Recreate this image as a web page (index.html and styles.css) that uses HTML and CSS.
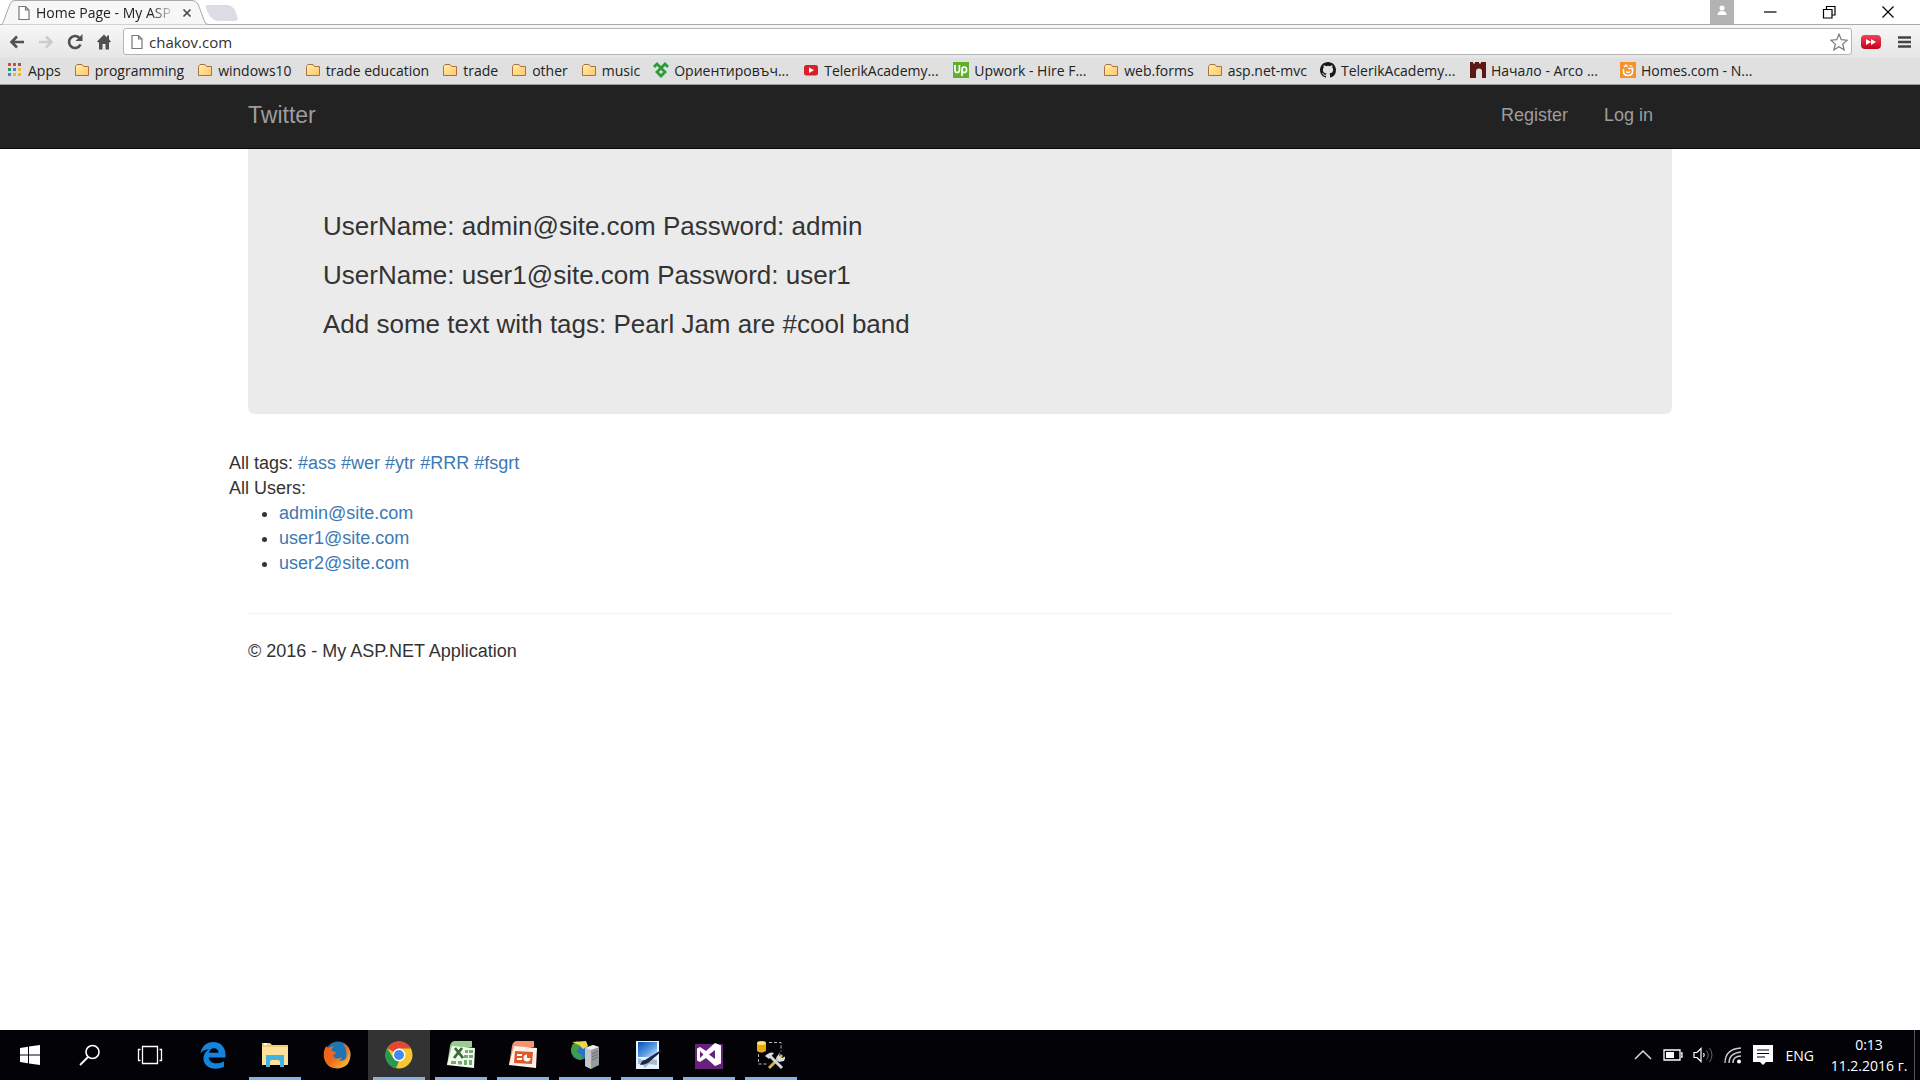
FILE: index.html
```html
<!DOCTYPE html>
<html lang="en">
<head>
<meta charset="utf-8">
<title>Home Page - My ASP.NET Application</title>
<link rel="stylesheet" href="styles.css">
</head>
<body>
<svg class="defs" width="0" height="0" aria-hidden="true">
  <defs>
    <linearGradient id="folder-fill" x1="0" y1="0" x2="1" y2="1"><stop offset="0" stop-color="#fff3a8"/><stop offset="1" stop-color="#ffc46b"/></linearGradient>
    <linearGradient id="red-fill" x1="0" y1="0" x2="0" y2="1"><stop offset="0" stop-color="#f0435c"/><stop offset="1" stop-color="#c4001f"/></linearGradient>
    <linearGradient id="screen-fill" x1="0" y1="0" x2="1" y2="1"><stop offset="0" stop-color="#0a4fae"/><stop offset=".6" stop-color="#5fa0e6"/><stop offset="1" stop-color="#e8f4ff"/></linearGradient>
    <linearGradient id="fox-fill" x1="0" y1="0" x2="1" y2="1"><stop offset="0" stop-color="#e8601c"/><stop offset=".5" stop-color="#ee6a1d"/><stop offset="1" stop-color="#ffd23c"/></linearGradient>
    <symbol id="folder" viewBox="0 0 16 16"><path d="M1.500 13.500V4.500L3 2.500h5l1.500 2h5v9z" fill="url(#folder-fill)" stroke="#a9713f"/></symbol>
    <symbol id="page" viewBox="0 0 16 16"><path d="M3 1.500h6.500L13 5v9.500H3zM9.500 1.500V5H13" fill="#fff" stroke="currentColor" stroke-width="1.200"/></symbol>
  </defs>
</svg>
<div class="screen">
  <header class="browser">
    <div class="tabstrip">
      <div class="tab">
        <svg class="tab-shape" viewBox="0 0 208 25" aria-hidden="true"><path d="M0 25C3 25 3 22 4 20L10 4Q11 .5 15 .5H192Q196 .5 198 4L204 20Q205 24.500 208 24.500V25z" fill="#f7f7f7" stroke="#aaa"/></svg>
        <svg class="icon tab-icon" aria-hidden="true"><use href="#page"/></svg>
        <span class="tab-title">Home Page - My ASP</span>
        <button class="tab-close" aria-label="Close tab"><svg viewBox="0 0 10 10"><path d="M1.500 1.500l7 7M8.500 1.500l-7 7" stroke="#444" stroke-width="1.600"/></svg></button>
      </div>
      <button class="new-tab" aria-label="New tab"></button>
      <div class="window-controls">
        <button class="profile" aria-label="Profile"><svg viewBox="0 0 24 24"><circle cx="12" cy="8" r="2.500" fill="#fff"/><path d="M7.500 15q0-4 4.500-4t4.500 4z" fill="#fff"/></svg></button>
        <button class="window-button" aria-label="Minimize"><svg viewBox="0 0 14 14"><path d="M1 7h12.500" stroke="#000" stroke-width="1.200"/></svg></button>
        <button class="window-button" aria-label="Restore"><svg viewBox="0 0 14 14"><path d="M1.500 4.500h8.500v8.500H1.500zM4.500 4.500v-3H13v8.500h-3" fill="none" stroke="#000" stroke-width="1.200"/></svg></button>
        <button class="window-button" aria-label="Close"><svg viewBox="0 0 14 14"><path d="M1.500 1.500l11 11M12.500 1.500l-11 11" stroke="#000" stroke-width="1.200"/></svg></button>
      </div>
    </div>
    <div class="toolbar">
      <button class="tool" aria-label="Back"><svg viewBox="0 0 16 16"><path d="M15 8H3M8 2.500L2.500 8 8 13.500" fill="none" stroke="#505050" stroke-width="2.600"/></svg></button>
      <button class="tool" aria-label="Forward"><svg viewBox="0 0 16 16"><path d="M1 8h12M8 2.500L13.500 8 8 13.500" fill="none" stroke="#ccc" stroke-width="2.600"/></svg></button>
      <button class="tool" aria-label="Reload"><svg viewBox="0 0 16 16"><path d="M12.500 4A6 6 0 1 0 13.500 10.500" fill="none" stroke="#505050" stroke-width="2.600"/><path d="M15.500 0v7h-7z" fill="#505050"/></svg></button>
      <button class="tool" aria-label="Home"><svg viewBox="0 0 16 16"><path d="M8 .5L1 7.500l1.200 1L3 8v7.500h3.500V10h3v5.500H13V8l.8.500L15 7.500l-2-2V1.500h-2v2z" fill="#505050"/></svg></button>
      <div class="omnibox">
        <svg class="icon" aria-hidden="true"><use href="#page"/></svg>
        <input class="address" type="text" aria-label="Address" value="chakov.com">
        <button class="star" aria-label="Bookmark this page"><svg viewBox="0 0 18 18"><path d="M9 1.200l2.300 5.500 5.900.5-4.500 3.900 1.400 5.800L9 13.800l-5.100 3.100 1.400-5.800L.8 7.200l5.900-.5z" fill="#fff" stroke="#777" stroke-width="1.200"/></svg></button>
      </div>
      <button class="extension" aria-label="Extension"><svg viewBox="0 0 20 16"><rect x="0" y="1" width="20" height="14" rx="4" fill="url(#red-fill)"/><path d="M5 5l5 3-5 3zM10 5l5 3-5 3z" fill="#fff"/></svg></button>
      <button class="extension" aria-label="Menu"><svg viewBox="0 0 20 16"><path d="M4 3.500h13M4 8h13M4 12.500h13" stroke="#444" stroke-width="2.600"/></svg></button>
    </div>
    <nav class="bookmarks" aria-label="Bookmarks">
      <a class="bookmark" href="#"><svg class="icon" viewBox="0 0 16 16"><path d="M1 1h3v3H1zM6 1h3v3H6z" fill="#d9493a"/><path d="M11 1h3v3h-3z" fill="#a54e66"/><path d="M1 6h3v3H1z" fill="#2a9a58"/><path d="M6 6h3v3H6zM1 11h3v3H1z" fill="#3787cc"/><path d="M11 6h3v3h-3zM6 11h3v3H6zM11 11h3v3h-3z" fill="#efb52b"/></svg>Apps</a>
      <a class="bookmark" href="#"><svg class="icon"><use href="#folder"/></svg>programming</a>
      <a class="bookmark" href="#"><svg class="icon"><use href="#folder"/></svg>windows10</a>
      <a class="bookmark" href="#"><svg class="icon"><use href="#folder"/></svg>trade education</a>
      <a class="bookmark" href="#"><svg class="icon"><use href="#folder"/></svg>trade</a>
      <a class="bookmark" href="#"><svg class="icon"><use href="#folder"/></svg>other</a>
      <a class="bookmark" href="#"><svg class="icon"><use href="#folder"/></svg>music</a>
      <a class="bookmark bookmark-long" href="#"><svg class="icon" viewBox="0 0 16 16"><path d="M1 5l3-3 8 8-4 4-4-4 8-8 3 3" fill="none" stroke="#2a9b35" stroke-width="2.800"/></svg>Ориентировъч...</a>
      <a class="bookmark bookmark-long" href="#"><svg class="icon" viewBox="0 0 16 16"><rect x="1" y="3" width="14" height="10.500" rx="2.500" fill="#d9202a"/><path d="M6 5.500l5 2.800-5 2.700z" fill="#fff"/></svg>TelerikAcademy...</a>
      <a class="bookmark bookmark-long" href="#"><svg class="icon" viewBox="0 0 16 16"><rect width="16" height="16" fill="#5faf2c"/><path d="M2 3v5q0 2.500 2.200 2.500T6.400 8V3M9 14V7.500Q9 5 11.300 5t2.300 2.700q0 2.800-2.300 2.800T9 8" fill="none" stroke="#fff" stroke-width="1.700"/></svg>Upwork - Hire F...</a>
      <a class="bookmark" href="#"><svg class="icon"><use href="#folder"/></svg>web.forms</a>
      <a class="bookmark" href="#"><svg class="icon"><use href="#folder"/></svg>asp.net-mvc</a>
      <a class="bookmark bookmark-long" href="#"><svg class="icon" viewBox="0 0 16 16"><path d="M8 0C3.580 0 0 3.580 0 8c0 3.540 2.290 6.530 5.470 7.590.4.070.55-.17.550-.38 0-.19-.01-.82-.01-1.490-2.010.37-2.530-.49-2.690-.94-.09-.23-.48-.94-.82-1.130-.28-.15-.68-.52-.01-.53.63-.01 1.080.58 1.230.82.72 1.210 1.870.87 2.330.66.070-.52.28-.87.510-1.070-1.780-.2-3.640-.89-3.640-3.950 0-.87.310-1.590.82-2.150-.08-.2-.36-1.020.080-2.120 0 0 .67-.21 2.200.82a7.600 7.600 0 0 1 4 0c1.530-1.040 2.200-.82 2.200-.82.440 1.100.160 1.920.080 2.120.51.560.82 1.270.82 2.150 0 3.070-1.870 3.750-3.650 3.950.29.250.54.730.54 1.480 0 1.070-.01 1.930-.01 2.200 0 .21.150.46.550.38A8 8 0 0 0 16 8c0-4.420-3.580-8-8-8z" fill="#1b1817"/></svg>TelerikAcademy...</a>
      <a class="bookmark bookmark-long" href="#"><svg class="icon" viewBox="0 0 16 16"><path d="M0 0h16v16h-4V9.500a3 3 0 0 0-3-3 3 3 0 0 0-3 3V16H0z" fill="#5c1717"/><path d="M3 0h2v1.500H3zM9 0h2v1.500H9z" fill="#e0e0e0"/></svg>Начало - Arco ...</a>
      <a class="bookmark bookmark-long" href="#"><svg class="icon" viewBox="0 0 16 16"><rect width="16" height="16" fill="#f5922a"/><path d="M3.500 7v2.500q0 4 4.500 4t4.500-4V6.500H8" fill="none" stroke="#fff" stroke-width="1.600"/><path d="M4 5l2-2 1.500 2M9.500 3.500l3 1M6 9.500q2 2 4 0" fill="none" stroke="#fff" stroke-width="1.300"/></svg>Homes.com - N...</a>
    </nav>
  </header>

  <div class="page">
    <nav class="navbar">
      <div class="container navbar-inner">
        <a class="brand" href="#">Twitter</a>
        <div class="nav-links"><a href="#">Register</a><a href="#">Log in</a></div>
      </div>
    </nav>
    <main class="container">
      <section class="jumbotron">
        <p>UserName: admin@site.com Password: admin</p>
        <p>UserName: user1@site.com Password: user1</p>
        <p>Add some text with tags: Pearl Jam are #cool band</p>
      </section>
      <section class="row">
        <div>All tags: <a href="#">#ass</a> <a href="#">#wer</a> <a href="#">#ytr</a> <a href="#">#RRR</a> <a href="#">#fsgrt</a></div>
        <div>All Users:</div>
        <ul class="users">
          <li><a href="#">admin@site.com</a></li>
          <li><a href="#">user1@site.com</a></li>
          <li><a href="#">user2@site.com</a></li>
        </ul>
      </section>
      <hr>
      <footer>© 2016 - My ASP.NET Application</footer>
    </main>
  </div>

  <div class="taskbar">
    <div class="system">
      <button class="task" aria-label="Start"><svg viewBox="0 0 28 28"><path d="M4 7l8-1.200v7.700H4zM13 5.600L24 4v9.500H13zM4 14.500h8v7.700L4 21zM13 14.500h11V24l-11-1.600z" fill="#fff"/></svg></button>
      <button class="task" aria-label="Search"><svg viewBox="0 0 28 28"><circle cx="16.500" cy="11" r="6.500" fill="none" stroke="#fff" stroke-width="1.600"/><path d="M12 16l-8 8" stroke="#fff" stroke-width="1.800"/></svg></button>
      <button class="task" aria-label="Task view"><svg viewBox="0 0 28 28"><path d="M6.500 5.500h15v17h-15zM4.500 8.500h-2v11h2M23.500 8.500h2v11h-2" fill="none" stroke="#fff" stroke-width="1.300"/></svg></button>
    </div>
    <div class="apps">
      <button class="task" aria-label="Edge"><svg viewBox="0 0 28 28"><path d="M1.500 12.400C2.500 5.500 7.500 1 14.300 1 22 1 26.500 6.500 26.500 13.500v3H9.800c.2 4 3.700 5.800 7.700 5.800 2.800 0 5.300-.8 7.500-2.100v5.500c-2.500 1.300-5.500 2-8.700 2C9 27.700 4.500 23.500 4.500 17.500c0-4.200 2.300-7.500 5.800-9.200C5.800 8.500 3 10.300 1.500 12.400zM10 11.800h9.500c0-3-1.800-4.600-4.500-4.600-2.800 0-4.500 1.800-5 4.600z" fill="#1683dc"/></svg></button>
      <button class="task open" aria-label="File Explorer"><svg viewBox="0 0 28 28"><path d="M1 2h8l2 2h16v20H1z" fill="#f3cd72"/><path d="M1 6h26v18H1z" fill="#ffe29a"/><path d="M5 14h18v12h-4v-5q0-2-2-2h-6q-2 0-2 2v5H5z" fill="#43b3df"/><path d="M3 2h3v2H3z" fill="#fff"/></svg></button>
      <button class="task" aria-label="Firefox"><svg viewBox="0 0 28 28"><circle cx="15" cy="13" r="12.500" fill="#1e75b4"/><path d="M2 7l2-2 1 2q2-2 6-1.500Q8 8 9 10q3 0 4 1.500-.5 2-3 2.500 1 4 5.500 3.500 2-.5 3.500-1-.5 2-3 3 6 1.500 7.500-4 1-6-3.500-13Q28 6 27.500 14 27 26 15 27.500 3 27.500.8 16 0 11 2 7z" fill="url(#fox-fill)"/></svg></button>
      <button class="task open active" aria-label="Chrome"><svg viewBox="0 0 28 28"><circle cx="14" cy="14" r="13.500" fill="#f8c72d"/><path d="M14 14L2.300 7.250A13.500 13.500 0 0 1 25.700 7.500H14z" fill="#df4935"/><path d="M2.300 7.250L8.500 17.500 14 20l-3 7.200A13.500 13.500 0 0 1 2.300 7.250z" fill="#259b51"/><circle cx="14" cy="14" r="6.400" fill="#fff"/><circle cx="14" cy="14" r="5" fill="#4489ee"/></svg></button>
      <button class="task open" aria-label="Excel"><svg viewBox="0 0 28 28"><path d="M3 5q1-5 5-5h17v6L5 8 2 24H0z" fill="#9cca91"/><path d="M5 5l23 2-1 20L0 24z" fill="#f2f9ed"/><path d="M18 9h3v3h-3zM22 9h4v3h-4zM17 14h4v3h-4zM22 14h4v3h-4zM4 20h5v3H4zM11 20h4v3.500h-4zM17 19h3v5h-3zM22 19h3v5h-3z" fill="#75ad70"/><path d="M8 7l8 10M15 7L7 17" stroke="#376b35" stroke-width="2.800"/></svg></button>
      <button class="task open" aria-label="PowerPoint"><svg viewBox="0 0 28 28"><path d="M3 5q1-5 5-5h17v6L5 8 2 24H0z" fill="#f5936f"/><path d="M5 5l23 2-1 20L0 24z" fill="#fff1e8"/><path d="M6 10l18 1-1 12-18-1z" fill="#e1592b"/><path d="M8 14h5M8 18h5" stroke="#fff" stroke-width="2"/><circle cx="18" cy="17" r="3.500" fill="#fff"/><path d="M18 17v-4h4v4z" fill="#e1592b"/></svg></button>
      <button class="task open" aria-label="IIS Manager"><svg viewBox="0 0 28 28"><circle cx="9" cy="10" r="9" fill="#2b72c6"/><path d="M1 4l5-4 3 4-3 7 6 4-2 4Q3 18 0 10z" fill="#3f9d45"/><path d="M1 1l14-1 2 5-5 3-4-4z" fill="#ecd744"/><path d="M14 7l8-3 6 2v18l-8 4-6-3z" fill="#969b9e"/><path d="M14 7l6 2v19l-6-3z" fill="#c4c6c7"/><path d="M14 7l8-3 6 2-8 3z" fill="#eee"/><path d="M21 13l6-3M21 16l6-3M21 19l6-3" stroke="#656b70"/></svg></button>
      <button class="task open" aria-label="Remote display"><svg viewBox="0 0 28 28"><path d="M3 0h23v28H3z" fill="#e9f2fa"/><path d="M5 1h19v15H5z" fill="url(#screen-fill)"/><path d="M5 17l8 3 5-2 6 1v5l-8-1-4 4-3-4H5z" fill="#a5bbd0"/><path d="M7 24q2-5 5-5L28 9l1 1-14 12q-4 2-8 2z" fill="#202447"/></svg></button>
      <button class="task open" aria-label="Visual Studio"><svg viewBox="0 0 28 28"><path d="M0 3h28v25H0z" fill="#68217a"/><path d="M20 2l6 2.500v18L20 25l-9-8-6 4-3-1.500v-12L5 6l6 4zm0 7l-6 4.500 6 4.500zM5 10v7l3.500-3.500z" fill="#fff" fill-rule="evenodd"/></svg></button>
      <button class="task open" aria-label="SQL Server Management Studio"><svg viewBox="0 0 28 28"><path d="M0 2v8q4 3 9 0V2z" fill="#e7ac13"/><ellipse cx="4.500" cy="2" rx="4.500" ry="2" fill="#ffe16b"/><path d="M12 1.500h12v9M1.500 13v10h8" fill="none" stroke="#b7b7b7" stroke-dasharray="3 2"/><path d="M12 27l13-13" stroke="#d4b04a" stroke-width="3"/><path d="M12 14l13 13" stroke="#cfd5d8" stroke-width="3"/><path d="M8 15q5-5 9-3l-5 6zM23 11l-1 4 3 2 4-2-2 5-5 1-3-4z" fill="#d8dde0"/></svg></button>
    </div>
    <div class="tray">
      <svg class="tray-icon" viewBox="0 0 20 20"><path d="M2 14l8-8 8 8" fill="none" stroke="#ddd" stroke-width="1.500"/></svg>
      <svg class="tray-icon" viewBox="0 0 20 20"><path d="M1 5h16v10H1zM18 8h1v4h-1" fill="none" stroke="#fff" stroke-width="1.300"/><path d="M3 7h8v6H3z" fill="#fff"/></svg>
      <svg class="tray-icon" viewBox="0 0 20 20"><path d="M1 7.500h3l4-4v13l-4-4H1zM10.500 8q1.500 2 0 4" fill="none" stroke="#fff" stroke-width="1.200"/><path d="M13.500 5.500q3.500 4.500 0 9M16.500 3q5 7 0 14" fill="none" stroke="#666"/></svg>
      <svg class="tray-icon" viewBox="0 0 20 20"><path d="M2 18Q2 4 18 3M6 18Q6 8 18 7M10 18q0-7 8-7" fill="none" stroke="#ccc" stroke-width="1.400"/><circle cx="16" cy="16.500" r="2" fill="#fff"/></svg>
      <svg class="tray-icon" viewBox="0 0 20 20"><path d="M0 0h20v17h-7l-3 3-3-3H0z" fill="#fff"/><path d="M4 5h12M4 8.500h12M4 12h8" stroke="#000" stroke-width="1.200"/></svg>
      <span class="language">ENG</span>
      <div class="clock"><span>0:13</span><span>11.2.2016 г.</span></div>
    </div>
    <button class="show-desktop" aria-label="Show desktop"></button>
  </div>
</div>
</body>
</html>
```
FILE: styles.css
```css
* { box-sizing: border-box; }
body { margin: 0; background: #fff; color: #333; font-family: "Liberation Sans", Arial, sans-serif; }
button { margin: 0; padding: 0; border: 0; background: none; font: inherit; }
svg { display: block; }
a { color: #3e78b3; text-decoration: none; }
.defs { position: absolute; }
.screen { display: flex; flex-direction: column; min-height: 100vh; }

/* Browser frame */
.browser { color: #222; font-family: "Open Sans", "Noto Sans", sans-serif; font-size: 14px; }
.tabstrip { display: flex; height: 25px; border-bottom: 1px solid #aaa; }
.tab { position: relative; display: flex; align-items: center; width: 208px; height: 25px; padding-left: 16px; }
.tab-shape { position: absolute; inset: 0; width: 208px; height: 25px; }
.tab-icon, .tab-title, .tab-close { position: relative; }
.tab-title { width: 140px; margin-left: 4px; white-space: nowrap; -webkit-mask-image: linear-gradient(90deg, #000 115px, transparent); mask-image: linear-gradient(90deg, #000 115px, transparent); }
.tab-close { margin-left: 6px; }
.tab-close svg { width: 10px; height: 10px; }
.new-tab { width: 28px; height: 16px; margin: 5px 0 0; border-radius: 2px 6px 4px 8px; background: #dcdce4; transform: skewX(20deg); }
.window-controls { display: flex; margin-left: auto; padding-right: 3px; }
.profile { width: 24px; height: 24px; margin-right: 6px; background: #b3b3b3; }
.window-button { display: flex; align-items: center; justify-content: center; width: 59px; height: 24px; }
.window-button svg { width: 14px; height: 14px; }
.icon { flex: none; width: 16px; height: 16px; color: #777; }
.toolbar { display: flex; align-items: center; gap: 13px; height: 33px; padding: 0 6px 0 9px; background: linear-gradient(#f7f7f7, #e6e6e6); }
.tool svg { width: 16px; height: 16px; }
.omnibox { display: flex; flex: 1; align-items: center; gap: 4px; height: 27px; margin: 0 -4px 0 -2px; padding: 0 3px 0 5px; border: 1px solid #b5b5b5; border-radius: 3px; background: #fff; }
.address { flex: 1; min-width: 0; padding: 0; border: 0; outline: 0; color: #333; background: none; font: inherit; font-size: 15px; }
.star svg { width: 18px; height: 18px; }
.extension svg { width: 20px; height: 16px; }
.bookmarks { display: flex; align-items: center; gap: 13px; height: 27px; padding: 0 0 2px 7px; border-bottom: 1px solid #999; background: #e0e0e0; white-space: nowrap; }
.bookmark { display: flex; align-items: center; gap: 5px; color: #222; }
.bookmark-long { width: 137px; }

/* Web page */
.page { flex: 1; font-size: 18px; line-height: 25px; }
.container { width: 100%; max-width: 1462px; margin: 0 auto; padding: 0 19px; }
.navbar { border-bottom: 1px solid #080808; background: #222; }
.navbar-inner { display: flex; justify-content: space-between; height: 63px; padding: 18px 19px; }
.navbar a { color: #9d9d9d; }
.brand { font-size: 23px; }
.nav-links { display: flex; gap: 36px; padding-right: 19px; }
.jumbotron { margin-bottom: 37px; padding: 59px 75px 72px; border-radius: 0 0 7px 7px; background: #ebebeb; font-size: 26px; line-height: 36px; }
.jumbotron p { margin: 0 0 13px; }
.jumbotron p:last-child { margin: 0; }
.row { margin: 0 -19px; }
.users { margin: 0 0 37px; padding-left: 50px; }
hr { margin: 0 0 25px; border: 0; border-top: 1px solid #f2f2f2; }

/* Taskbar */
.taskbar { display: flex; height: 50px; background: #020207; color: #fff; font-family: "Open Sans", "Noto Sans", sans-serif; font-size: 14px; }
.system, .apps, .tray { display: flex; }
.system .task { width: 60px; }
.apps { margin-left: 2px; }
.task { display: flex; align-items: center; justify-content: center; width: 62px; height: 50px; border: 0 solid #020207; border-width: 0 5px; }
.task svg { width: 28px; height: 28px; }
.open { box-shadow: inset 0 -3px #86b1e0; }
.active { border-color: #333; background: #333; }
.tray { align-items: center; gap: 10px; margin-left: auto; }
.tray-icon { width: 20px; height: 20px; }
.language { margin-left: 3px; }
.clock { display: flex; flex-direction: column; align-items: center; width: 90px; line-height: 21px; }
.show-desktop { width: 6px; height: 50px; border-left: 1px solid #555; }
```
